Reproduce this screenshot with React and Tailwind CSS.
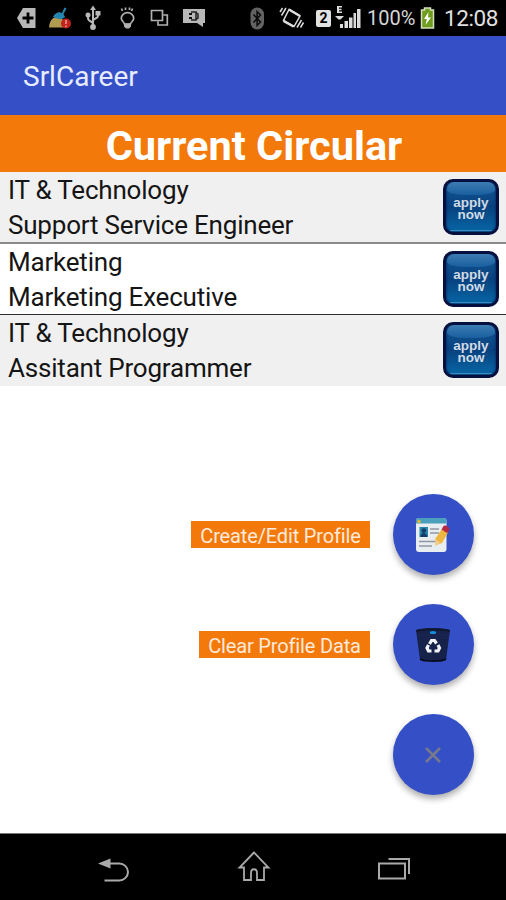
const circulars = [
  { id: 1, category: "IT & Technology", title: "Support Service Engineer", row: "h-[72px] bg-[#f0f0f0] border-b-2 border-[#8a8a8a]" },
  { id: 2, category: "Marketing", title: "Marketing Executive", row: "h-[71px] bg-white border-b border-[#2e2e2e]" },
  { id: 3, category: "IT & Technology", title: "Assitant Programmer", row: "h-[71px] bg-[#f0f0f0]" },
];

function StatusBar() {
  return (
    <div className="flex h-9 shrink-0 items-center bg-black pl-4 text-[#b8b8b8]">
      <svg width="20" height="22" viewBox="0 0 20 22">
        <path d="M1 11 7 1h12.5v20H7z" fill="#b8b8b8" />
        <path d="M12 5.500v11M6.500 11h11" stroke="#000" strokeWidth="2.8" />
      </svg>
      <svg className="ml-3" width="24" height="22" viewBox="0 0 24 22">
        <path d="M1 20.500c.5-6 3-10.500 8-10.500s8 4 9 10.500z" fill="#b09a50" />
        <path d="M5 9.500c3-4 6-5 9-3.500l2.500-5.500 2 1-3 5.500 1.500 3c-3 3-9 2.500-12-.5z" fill="#2585b0" />
        <circle cx="18" cy="16.500" r="5" fill="#c2231d" />
        <path d="M18 13v4M18 18.500v1.500" stroke="#e5a29c" strokeWidth="1.500" />
      </svg>
      <svg className="ml-3" width="18" height="26" viewBox="0 0 18 26" fill="none" stroke="#b8b8b8" strokeWidth="2">
        <path d="M9 4v18M9 19c0-3-5-2-5-6v-2M9 16c0-3 5-2 5-5V8" />
        <path d="M9 0.500 12 5H6zM11.500 6h5v4.500h-5z" fill="#b8b8b8" stroke="none" />
        <circle cx="4" cy="10" r="2.500" fill="#b8b8b8" stroke="none" />
        <circle cx="9" cy="22" r="2.900" fill="#b8b8b8" stroke="none" />
      </svg>
      <svg className="ml-4" width="18" height="24" viewBox="0 0 18 24" fill="none" stroke="#b0b0b0" strokeWidth="1.700">
        <path d="M3.500 2.500 4.500 5M7.500 1.500V4M11.500 1.500V4M14.500 2.500 13.500 5" />
        <path d="M6.500 18C6 16 3.300 15 3.300 12.300a6.200 5.600 0 0 1 12.400 0c0 2.700-2.700 3.700-3.200 5.700z" />
        <path d="M6 17.500h7v3l-2 2H8l-2-2z" fill="#b0b0b0" stroke="none" />
      </svg>
      <svg className="ml-[14px]" width="20" height="18" viewBox="0 0 20 18" fill="none" stroke="#b0b0b0" strokeWidth="1.700">
        <path d="M1.500 1.500h11v10h-11zM13.500 6h3.800v10H8v-3.500" />
      </svg>
      <svg className="ml-[13px]" width="23" height="20" viewBox="0 0 23 20">
        <path d="M0 1h22v14h-2v4l-6-4H0z" fill="#b8b8b8" />
        <path d="M6 5h3v2H6zM6 9h3v2H6z" fill="#111" />
        <path d="M8 4h5v8H8M13 4.500l2 1.500v4l-2 1.500" fill="none" stroke="#222" strokeWidth="1.500" />
      </svg>

      <svg className="ml-11" width="15" height="23" viewBox="0 0 15 23">
        <rect x=".5" y=".5" width="13.500" height="22" rx="6.700" fill="#626262" />
        <path d="m3.500 7.500 7 7.500-3.400 3.500v-14l3.400 3.500-7 7.500" fill="none" stroke="#090909" strokeWidth="1.500" />
      </svg>
      <svg className="ml-[14px]" width="26" height="24" viewBox="0 0 26 24" fill="none" stroke="#dcdcdc" strokeWidth="1.500">
        <path d="m10 3.500 11 6.500-6 10.500L4.500 14.500z" />
        <path d="m10 3.500 11 6.500" strokeWidth="2.300" />
        <path d="m4.500 15 10 5.500" strokeWidth="2.500" />
        <path d="M1 6 3.500 2M2.500 9.500 7 2M18 21.500l4.500-7.500M21.500 21.500l3-5" />
      </svg>
      <div className="ml-[11px] flex h-[17px] w-[15px] items-center justify-center rounded-[2px] bg-[#e2e2e2] font-['Roboto',sans-serif] text-[14px] font-bold text-black">2</div>
      <svg className="ml-1" width="26" height="24" viewBox="0 0 26 24" fill="#dcdcdc">
        <path d="M2 0h5v1.500H4v1.300h2.500v1.400H4v1.400h3V7H2zM0 10h9l-3.500 3.500h-2zM5 18h3v4H5zM9.500 15H13v7H9.500zM14 11.500h3.500V22H14zM18.500 7H21v15h-2.500zM22 3h3.500v19H22z" />
      </svg>
      <span className="ml-1.5 w-[50px] font-['Roboto',sans-serif] text-[20px] whitespace-nowrap text-[#d6d6d6]">100%</span>
      <svg className="ml-[3px]" width="15" height="22" viewBox="0 0 15 22">
        <path d="M4.500 1h6v2h3v18h-12V3h3z" fill="#6f9c1d" stroke="#d5dfbd" strokeWidth="1.500" />
        <path d="M8.500 5 4 12h2.800L5.500 18 11 10.500H8z" fill="#fff" />
      </svg>
      <span className="ml-[9px] pt-[2px] font-['Roboto',sans-serif] text-[22.500px] tracking-[-0.4px] whitespace-nowrap text-[#e0e0e0]">12:08</span>
    </div>
  );
}

function ApplyButton() {
  return (
    <button className="relative flex h-14 w-14 justify-center overflow-hidden rounded-[10px] border-[3px] border-[#06103f] bg-linear-to-b from-[#155695] via-[#07427f] to-[#0867a6] pt-[15px] shadow-[inset_0_0_3px_#031b50]">
      <span className="absolute inset-x-[1px] top-0 h-[13px] rounded-t-[7px] rounded-b-[40%] bg-linear-to-b from-[#3c7cb3] to-[#185e9e]" />
      <span className="absolute inset-x-1 bottom-[1px] h-px rounded-full bg-[#3d8cbf]" />
      <span className="relative font-['Liberation_Sans',sans-serif] text-[13.500px] leading-[12px] font-bold text-[#d3dbe6]">
        apply
        <br />
        now
      </span>
    </button>
  );
}

function Fab({ children }) {
  return (
    <button className="flex h-[81px] w-[81px] items-center justify-center rounded-full bg-[#3550c6] shadow-[0_4px_6px_rgba(0,0,0,0.32)]">
      {children}
    </button>
  );
}

function ProfileIcon() {
  return (
    <svg className="mr-1" width="36" height="36" viewBox="0 0 36 36">
      <rect x="2" y="1" width="30.500" height="34" rx="3" fill="#e7edf1" />
      <path d="M2 6.500V4a3 3 0 0 1 3-3h24.500a3 3 0 0 1 3 3v2.500z" fill="#4a9fbd" />
      <circle cx="5" cy="4.500" r="1.800" fill="#dcb53c" />
      <rect x="5.500" y="10" width="8.500" height="10" fill="#2685aa" />
      <path d="M6.500 20c0-3 1.500-4 3.300-4s3.300 1 3.300 4z" fill="#143c68" />
      <circle cx="9.800" cy="13.600" r="2.300" fill="#143c68" />
      <path d="M16 12h9M16 16h9M5 24.500h17M5 29h13" stroke="#9296a2" strokeWidth="1.500" />
      <path d="m28 12 6 3.500-6 10.500-7 2.500.5-7z" fill="#edb63e" />
      <path d="m21.500 22.500 5 3.200-5.500 2.800z" fill="#f1ce91" />
      <path d="m27.500 12.500 2-3.500c2-2 7 2 5.500 4.500L33 16z" fill="#b72843" />
    </svg>
  );
}

function BinIcon() {
  return (
    <svg className="mr-[2px]" width="36" height="36" viewBox="0 0 36 36">
      <path d="M1 3 5 33c4 2.500 22 2.500 26 0l4-30c-6-2.500-28-2.500-34 0z" fill="#17224a" />
      <path d="M1 3c6-2.500 28-2.500 34 0l-.4 2C28 3 8 3 1.300 5z" fill="#101831" />
      <path d="M3 8h31M4 11h29" stroke="#1d2a58" strokeWidth=".8" />
      <ellipse cx="18" cy="5.500" rx="3.200" ry="1.500" fill="#168dde" />
      <path d="M5 31c5 3 21 3 26.300 0l-.3 2c-4 2.500-22 2.500-26 0z" fill="#080d20" />
      <g fill="none" stroke="#f1f3f8" strokeWidth="3.200">
        <path d="m14.500 17 2-3.500h3l2 3M23 18l1.500 3-1.500 3h-3.500M16.500 24h-3L12 21l1.500-3" />
      </g>
    </svg>
  );
}

function NavBar() {
  return (
    <div className="flex h-[67px] shrink-0 items-center justify-between border-t border-[#777] bg-black pr-[94px] pl-24">
      <svg className="mt-1" width="36" height="28" viewBox="0 0 36 28">
        <path d="M13 8.500h10.500c4 0 8.500 3.500 8.500 8.500s-4.500 8.500-8.500 8.500H8.500" fill="none" stroke="#aaa" strokeWidth="2" />
        <path d="M2 8.500 14.500 3.500v10z" fill="#aaa" />
      </svg>
      <svg width="34" height="34" viewBox="0 0 34 34" fill="none" stroke="#aaa" strokeWidth="1.800">
        <path d="M17 2.500 2.500 17.500H7V30h7v-7c0-5 6-5 6 0v7h7V17.500h4.500z" />
      </svg>
      <svg className="mt-1" width="36" height="26" viewBox="0 0 36 26" fill="none" stroke="#aaa" strokeWidth="2">
        <path d="M3 7.500h26v15H3zM12.500 3H33v15" />
      </svg>
    </div>
  );
}

export default function App() {
  return (
    <div className="flex h-[900px] w-[506px] flex-col overflow-hidden bg-white font-['Roboto',sans-serif]">
      <StatusBar />
      <header className="flex h-[79px] shrink-0 items-center bg-[#3550c6] px-[23px] pt-[3px]">
        <h1 className="text-[28px] text-[#e8ecff]">SrlCareer</h1>
      </header>
      <h2 className="flex h-[57px] shrink-0 items-center justify-center bg-[#f4790b] pt-[5px] pl-[2px] text-[41.500px] font-bold text-white">
        <span>Current Circular</span>
      </h2>

      <ul className="shrink-0">
        {circulars.map((item) => (
          <li key={item.id} className={`flex items-start justify-between pr-[7px] pl-2 ${item.row}`}>
            <div className="pt-[1px] text-[26px] leading-[35px] tracking-[-0.2px] text-[#151515]">
              <p>{item.category}</p>
              <p>{item.title}</p>
            </div>
            <div className="pt-[7px]">
              <ApplyButton />
            </div>
          </li>
        ))}
      </ul>

      <main className="flex flex-1 flex-col items-end gap-[29px] pt-[108px] pr-8">
        <div className="flex items-center gap-[23px]">
          <span className="flex h-[27px] w-[179px] items-center justify-center bg-[#f4790b] pt-[2px] text-[20px] tracking-[-0.15px] text-[#ffeadb]">Create/Edit Profile</span>
          <Fab><ProfileIcon /></Fab>
        </div>
        <div className="flex items-center gap-[23px]">
          <span className="flex h-[27px] w-[171px] items-center justify-center bg-[#f4790b] pt-[2px] text-[20px] tracking-[-0.15px] text-[#ffeadb]">Clear Profile Data</span>
          <Fab><BinIcon /></Fab>
        </div>
        <Fab>
          <svg className="mr-[2px]" width="18" height="18" viewBox="0 0 18 18">
            <path d="m2 2 14 14M16 2 2 16" stroke="#78798a" strokeWidth="2.500" />
          </svg>
        </Fab>
      </main>
      <NavBar />
    </div>
  );
}
